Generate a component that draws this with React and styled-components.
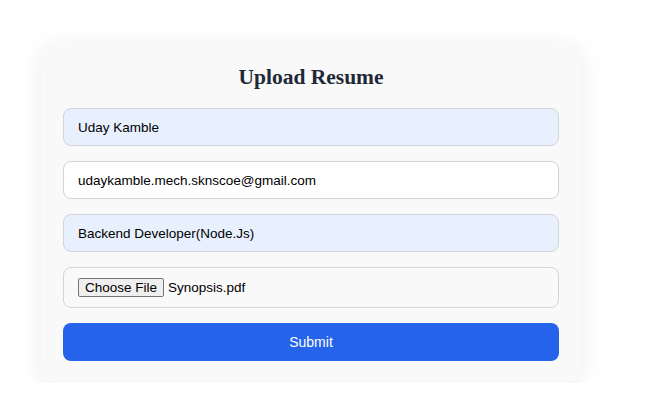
import React from "react";
import styled, { createGlobalStyle } from "styled-components";

const GlobalStyle = createGlobalStyle`
  body {
    margin: 0;
    background: #ffffff;
    font-family: "Liberation Sans", Arial, sans-serif;
  }
`;

const Page = styled.div`
  padding: 43px 0 0 41px;
`;

const Card = styled.form`
  width: 540px;
  box-sizing: border-box;
  padding: 20px 22px 22px;
  background: #f9f9f9;
  border-radius: 16px;
  box-shadow: 0 4px 24px rgba(0, 0, 0, 0.08);
  display: flex;
  flex-direction: column;
`;

const Title = styled.h2`
  margin: 0 0 17px;
  font-family: "Liberation Serif", "Times New Roman", serif;
  font-size: 21.5px;
  line-height: 28px;
  font-weight: 700;
  color: #1f2937;
  text-align: center;
`;

const Fields = styled.div`
  display: flex;
  flex-direction: column;
  gap: 15px;
`;

const Input = styled.input`
  box-sizing: border-box;
  height: 38px;
  width: 100%;
  padding: 0 14px;
  border: 1px solid #d1d5db;
  border-radius: 8px;
  background: ${({ $filled }) => ($filled ? "#e8f0fe" : "#ffffff")};
  font-family: "Liberation Sans", Arial, sans-serif;
  font-size: 13.5px;
  color: #000000;
  outline: none;
`;

const FileBox = styled.label`
  box-sizing: border-box;
  height: 41px;
  display: flex;
  align-items: center;
  padding: 0 14px;
  border: 1px solid #d1d5db;
  border-radius: 8px;
  font-size: 13.5px;
  color: #000000;
`;

const FileButton = styled.span`
  display: inline-block;
  padding: 1px 6px;
  line-height: 15px;
  border: 1px solid #767676;
  border-radius: 2px;
  background: #efefef;
  margin-right: 4px;
`;

const Submit = styled.button`
  height: 38px;
  border: none;
  border-radius: 8px;
  background: #2563eb;
  color: #ffffff;
  font-family: "Liberation Sans", Arial, sans-serif;
  font-size: 14px;
  cursor: pointer;
`;

export default function App() {
  return (
    <>
      <GlobalStyle />
      <Page>
        <Card onSubmit={(e) => e.preventDefault()}>
          <Title>Upload Resume</Title>
          <Fields>
            <Input $filled defaultValue="Uday Kamble" />
            <Input defaultValue="udaykamble.mech.sknscoe@gmail.com" />
            <Input $filled defaultValue="Backend Developer(Node.Js)" />
            <FileBox>
              <FileButton>Choose File</FileButton>
              Synopsis.pdf
            </FileBox>
            <Submit type="submit">Submit</Submit>
          </Fields>
        </Card>
      </Page>
    </>
  );
}
